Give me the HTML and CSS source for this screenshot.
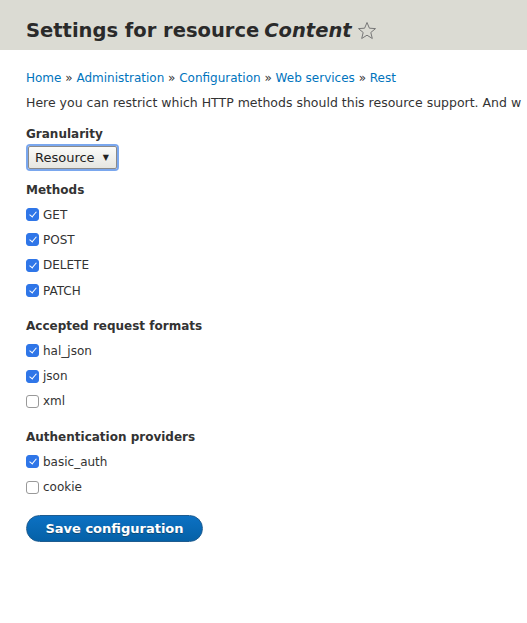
FILE: index.html
```html
<!DOCTYPE html>
<html>
<head>
<meta charset="utf-8">
<link rel="stylesheet" href="styles.css">
</head>
<body>
<header class="page-header">
  <h1 class="title">Settings for resource <em>Content</em> <svg class="star" width="20" height="20" viewBox="0 0 20 20"><path d="M10 1.5 L12.4 7.2 L18.5 7.6 L13.8 11.5 L15.3 17.5 L10 14.2 L4.7 17.5 L6.2 11.5 L1.5 7.6 L7.6 7.2 Z" fill="none" stroke="#777" stroke-width="1" stroke-linejoin="round"/></svg></h1>
</header>
<main class="content">
  <nav class="breadcrumb"><a href="#">Home</a> » <a href="#">Administration</a> » <a href="#">Configuration</a> » <a href="#">Web services</a> » <a href="#">Rest</a></nav>
  <p class="desc">Here you can restrict which HTTP methods should this resource support. And w</p>

  <div class="field first">
    <div class="label">Granularity</div>
    <div class="select">Resource <span class="arrow">▼</span></div>
  </div>

  <div class="field">
    <div class="label">Methods</div>
    <div class="opt"><span class="cb on"></span>GET</div>
    <div class="opt"><span class="cb on"></span>POST</div>
    <div class="opt"><span class="cb on"></span>DELETE</div>
    <div class="opt"><span class="cb on"></span>PATCH</div>
  </div>

  <div class="field">
    <div class="label">Accepted request formats</div>
    <div class="opt"><span class="cb on"></span>hal_json</div>
    <div class="opt"><span class="cb on"></span>json</div>
    <div class="opt"><span class="cb"></span>xml</div>
  </div>

  <div class="field">
    <div class="label">Authentication providers</div>
    <div class="opt"><span class="cb on"></span>basic_auth</div>
    <div class="opt"><span class="cb"></span>cookie</div>
  </div>

  <button class="btn">Save configuration</button>
</main>
</body>
</html>
```

FILE: styles.css
```css
html, body { margin: 0; padding: 0; background: #fff; }
body { font-family: "DejaVu Sans", Verdana, sans-serif; color: #333; font-size: 12px; overflow: hidden; }
.page-header { background: #dbdbd3; height: 50px; padding: 11px 26px 0; box-sizing: border-box; display: flex; align-items: center; }
.title { margin: 0; font-size: 19.5px; font-weight: bold; color: #2a2a2a; white-space: nowrap; display: flex; align-items: center; gap: 5px; }
.title em { font-style: italic; }
.star { margin-left: 0; }
.content { padding: 19px 26px 0; }
.breadcrumb { font-size: 12px; line-height: 18px; color: #333; white-space: nowrap; }
.breadcrumb a { color: #0074bd; text-decoration: none; }
.desc { margin: 7px 0 0; white-space: nowrap; line-height: 18px; font-size: 12.5px; }
.field { margin-top: 15px; }
.field.first { margin-top: 14px; margin-bottom: -2px; }
.label { font-weight: bold; font-size: 12px; line-height: 17px; color: #333; }
.select { display: flex; width: max-content; align-items: center; gap: 8px; margin-top: 3px; height: 21px; padding: 0 7px 0 6px; border: 1px solid #8a8a8a; background: linear-gradient(#fbfbf9, #e6e6e1); box-shadow: 0 0 0 2px #7aa7ee; border-radius: 2px; font-size: 13px; color: #222; margin-left: 2px; }
.arrow { font-size: 8px; }
.label + .opt { margin-top: 3px; }
.opt { display: flex; align-items: center; height: 25.3px; font-size: 12px; color: #333; }
.cb { width: 11px; height: 11px; border: 1px solid #999; border-radius: 3px; background: #fff; margin-right: 4px; position: relative; box-sizing: content-box; }
.cb.on { background: #2f76e8; border-color: #2f76e8; }
.cb.on::after { content: ""; position: absolute; left: 3.5px; top: 1px; width: 3px; height: 6px; border: solid #fff; border-width: 0 1.6px 1.6px 0; transform: rotate(40deg); }
.btn { margin-top: 15px; display: block; width: 177px; height: 27px; border-radius: 14px; border: 1px solid #1e5c90; background: linear-gradient(#0c71c3, #0561a7); color: #fff; font-family: "DejaVu Sans", Verdana, sans-serif; font-weight: bold; font-size: 13px; text-shadow: 0 1px 0 #134a73; padding: 0; }
```
